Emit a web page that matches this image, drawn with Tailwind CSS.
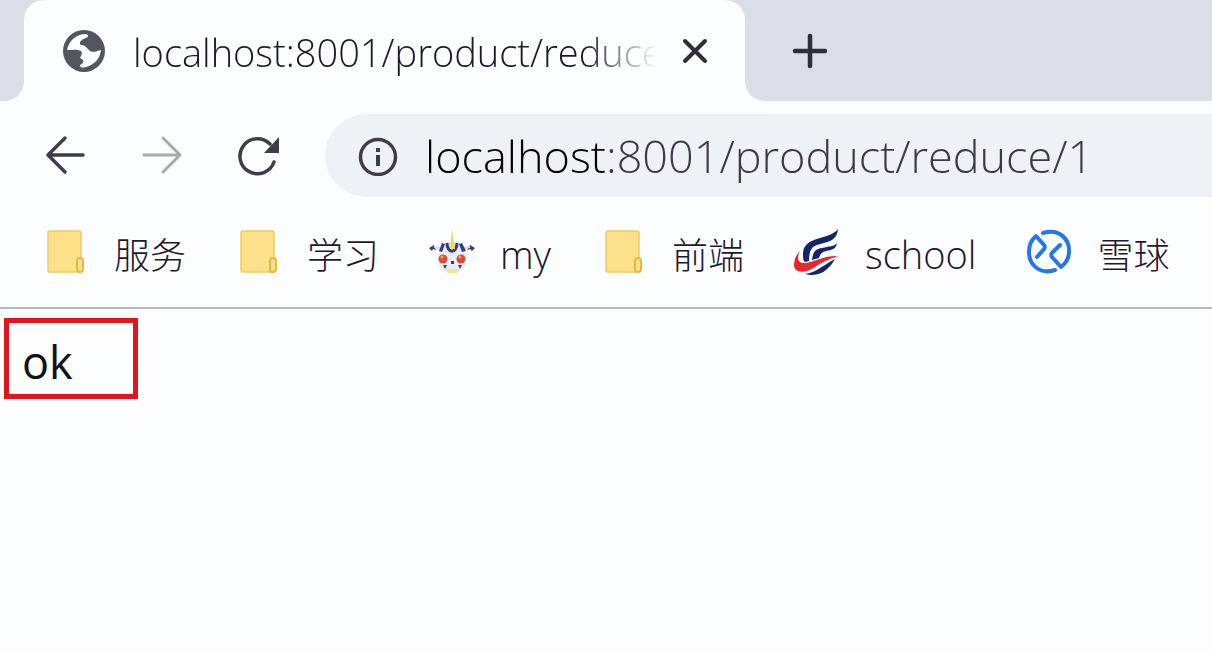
<!DOCTYPE html>
<html lang="zh-CN">
<head>
  <meta charset="UTF-8" />
  <meta name="viewport" content="width=device-width, initial-scale=1.0" />
  <title>localhost:8001/product/reduce/1</title>
  <script src="https://cdn.jsdelivr.net/npm/@tailwindcss/browser@4"></script>
</head>
<body class="min-h-screen overflow-x-hidden bg-[#fcfdff] font-['Open_Sans','Noto_Sans_CJK_SC',sans-serif] font-light text-[#1f182c]">
  <header class="border-b-2 border-[#b5b7bf]">

    <!-- Tab strip -->
    <div class="flex h-[101px] bg-[#fcfdff]">
      <div class="w-6 shrink-0 rounded-br-[20px] bg-[#dadee7]"></div>
      <div class="flex-1 max-w-[721px] bg-[#dadee7]">
        <div class="flex h-full items-center rounded-t-[20px] bg-[#fcfdff] pl-[38px] pr-8">
          <svg class="size-[44px] shrink-0" viewBox="0 0 44 44">
            <circle cx="22" cy="22" r="21" fill="#53565f" />
            <path d="M24 5C15 5 7 11 5 21c5 0 10-1 14 1 2 2 0 5-1 7 3 1 4 3 3 5l-3 2c0 3 3 3 6 2 8-2 14-8 15-17-4 1-8 3-11 1-3-3-5-6-9-6-2-1-1-4 1-5 2-2 6-2 6-4 0-1-1-2-2-2z" fill="#fcfdff" />
          </svg>
          <div class="ml-[27px] min-w-0 flex-1 overflow-hidden pt-1 whitespace-nowrap text-[38px] mask-r-from-86% mask-r-to-100%">localhost:8001/product/reduce/1</div>
          <button type="button" aria-label="Close tab" class="ml-5 flex size-9 shrink-0 items-center justify-center">
            <svg class="size-[26px]" viewBox="0 0 26 26" fill="none" stroke="#302e38" stroke-width="4" stroke-linecap="round">
              <path d="M3 3l20 20M23 3L3 23" />
            </svg>
          </button>
        </div>
      </div>
      <div class="flex flex-1 items-center rounded-bl-[20px] bg-[#dadee7] pl-[47px]">
        <button type="button" aria-label="New tab" class="flex size-9 items-center justify-center">
          <svg class="size-9" viewBox="0 0 36 36" fill="none" stroke="#302e38" stroke-width="4.500" stroke-linecap="round">
            <path d="M18 3v30M3 18h30" />
          </svg>
        </button>
      </div>
    </div>

    <!-- Toolbar -->
    <div class="flex items-center pt-[13px] pl-[44px]">
      <div class="flex shrink-0 gap-[52px]">
        <button type="button" aria-label="Back">
          <svg class="size-11" viewBox="0 0 44 44" fill="none" stroke="#403c49" stroke-width="3.500" stroke-linecap="round" stroke-linejoin="round">
            <path d="M39 21H4M21 4L4 21l17 17" />
          </svg>
        </button>
        <button type="button" aria-label="Forward">
          <svg class="size-11" viewBox="0 0 44 44" fill="none" stroke="#a9a8b0" stroke-width="3" stroke-linecap="round" stroke-linejoin="round">
            <path d="M4 21h35M23 4l17 17-17 17" />
          </svg>
        </button>
        <button type="button" aria-label="Reload">
          <svg class="size-11" viewBox="0 0 44 44" fill="none" stroke="#403c49" stroke-width="3.500" stroke-linecap="round">
            <path d="M34 10A17.500 17.500 0 1 0 38 28" />
            <path d="M43 3v16H28z" fill="#403c49" stroke="none" />
          </svg>
        </button>
      </div>
      <div class="ml-[45px] flex h-[83px] min-w-0 flex-1 items-center rounded-l-full bg-[#eef1f5] pl-[33px]">
        <svg class="size-10 shrink-0" viewBox="0 0 40 40">
          <circle cx="20" cy="21" r="17.500" fill="none" stroke="#403c49" stroke-width="3.500" />
          <path d="M18 19h4v11h-4zM18 12h4v4h-4z" fill="#403c49" />
        </svg>
        <input type="text" aria-label="Address" value="localhost:8001/product/reduce/1" class="ml-[27px] h-full min-w-0 flex-1 bg-[linear-gradient(90deg,#000008_180px,#3d3748_180px)] bg-clip-text text-[45px] text-transparent outline-none" />
      </div>
    </div>

    <!-- Bookmarks bar -->
    <nav class="flex h-[110px] items-center gap-[50px] pl-[43px] text-[36px] whitespace-nowrap">
      <a href="#" class="flex items-center gap-[25px]">
        <svg class="size-[46px]" viewBox="0 0 46 46">
          <rect x="5" y="2" width="33" height="41" rx="2" fill="#fde08a" stroke="#f0cb5d" stroke-width="1.500" />
          <rect x="34" y="29" width="6" height="14" rx="3" fill="#fde08a" stroke="#e6b93c" stroke-width="2" />
        </svg>
        <span class="pt-2">服务</span>
      </a>
      <a href="#" class="flex items-center gap-[25px]">
        <svg class="size-[46px]" viewBox="0 0 46 46">
          <rect x="5" y="2" width="33" height="41" rx="2" fill="#fde08a" stroke="#f0cb5d" stroke-width="1.500" />
          <rect x="34" y="29" width="6" height="14" rx="3" fill="#fde08a" stroke="#e6b93c" stroke-width="2" />
        </svg>
        <span class="pt-2">学习</span>
      </a>
      <a href="#" class="flex items-center gap-[25px]">
        <svg class="size-[46px]" viewBox="0 0 46 46">
          <path d="M12 16c6-3 16-3 22 0 4 8 4 18 0 24-5 5-17 5-22 0-4-6-4-16 0-24z" fill="#e9ecfa" />
          <path d="M0 19l5-3 2 5-3-1-1 2zM46 19l-5-3-3 5 3-1 2 2z" fill="#343b8c" />
          <path d="M5 18l6 1M41 18l-6 1" stroke="#d5dcf3" stroke-width="2" />
          <path d="M10 22l3-8 3 1-3 8zM37 22l-4-8-3 1 3 8z" fill="#343b8c" />
          <path d="M18 14c0 11 10 11 10 0" fill="#f2e487" stroke="#343b8c" stroke-width="3" />
          <path d="M23 0l3 20h-5z" fill="#ebd867" />
          <circle cx="14" cy="30" r="4.500" fill="#df4a32" />
          <circle cx="32" cy="30" r="4.500" fill="#df4a32" />
          <circle cx="13" cy="28" r="1.500" fill="#f7a184" />
          <circle cx="31" cy="28" r="1.500" fill="#f7a184" />
          <path d="M22 32h3v3h-3zM14 36l4 0-2 4zM33 36l-4 0 2 4z" fill="#343b8c" />
          <path d="M16 40h15l-3 4h-9z" fill="#f0e58e" />
        </svg>
        <span class="pt-1 text-[38px]">my</span>
      </a>
      <a href="#" class="flex items-center gap-[25px]">
        <svg class="size-[46px]" viewBox="0 0 46 46">
          <rect x="5" y="2" width="33" height="41" rx="2" fill="#fde08a" stroke="#f0cb5d" stroke-width="1.500" />
          <rect x="34" y="29" width="6" height="14" rx="3" fill="#fde08a" stroke="#e6b93c" stroke-width="2" />
        </svg>
        <span class="pt-2">前端</span>
      </a>
      <a href="#" class="flex items-center gap-[25px]">
        <svg class="size-[46px]" viewBox="0 0 46 46">
          <path d="M44 0c-3 4-8 6-18 9C14 12 9 17 9 25c0 4 0 7 2 8l4-1c0-9 2-14 8-16 9-3 20-3 21-16z" fill="#14246c" />
          <path d="M43 14c-3 4-8 3-15 5-7 1-9 4-10 12l7-2c1-4 3-6 7-7 6-1 10-2 11-8z" fill="#14246c" />
          <path d="M6 22C3 28 3 34 10 34c9 0 20-8 34-7-11 4-17 7-23 11C11 45 0 44 0 36c0-5 2-10 6-14z" fill="#e92530" />
          <path d="M11 45c10-1 17-8 30-15-5 9-14 19-30 15z" fill="#14246c" />
        </svg>
        <span class="pt-1 text-[38px]">school</span>
      </a>
      <a href="#" class="flex items-center gap-[25px]">
        <svg class="size-[46px]" viewBox="0 0 46 46" fill="none" stroke="#2477e8" stroke-width="4" stroke-linecap="round" stroke-linejoin="round">
          <path d="M17 4C34-1 44 11 43 23c0 6-3 11-8 15l-9-10c-1-1-1-3 0-4l8-8" />
          <path d="M29 41C14 46 3 36 3 23 3 16 5 11 10 7l8 9c1 1 1 3 0 4l-7 8" />
        </svg>
        <span class="pt-2">雪球</span>
      </a>
    </nav>
  </header>

  <!-- Page content -->
  <main class="px-1 pt-[9px]">
    <div class="flex h-[81px] w-[134px] items-center border-[5px] border-[#e3141c] pt-1.5 pl-[13px] text-[45px] font-normal text-[#111118]">ok</div>
  </main>
</body>
</html>
